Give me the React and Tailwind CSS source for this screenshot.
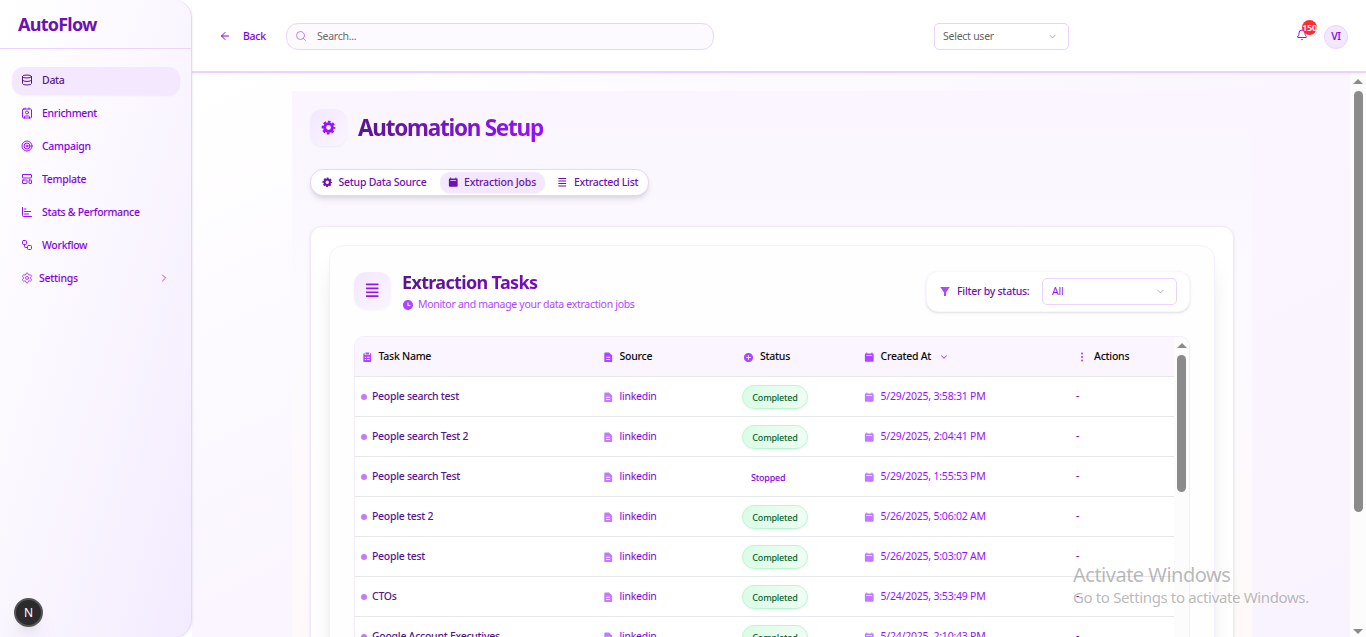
import {
  ArrowLeft, Bell, ChartBar, ChevronDown, ChevronRight, Contact, Database,
  LayoutTemplate, Search, Settings, Target, Workflow,
} from "lucide-react";
import { RiAddCircleFill, RiFilterFill, RiMore2Fill, RiTimeFill } from "react-icons/ri";

function CalendarIcon({ size = 10.5, className = "" }) {
  return (
    <svg width={size} height={size} viewBox="0 0 24 24" fill="currentColor" className={className}>
      <path fillRule="evenodd" d="M17 3.500h4a1 1 0 0 1 1 1V20a2 2 0 0 1-2 2H4a2 2 0 0 1-2-2V4.500a1 1 0 0 1 1-1h2V1h2v2.500h10V1h2v2.500zM5.500 7.500v1.800h13V7.500h-13z" />
    </svg>
  );
}

function GearIcon({ size = 10.5, className = "" }) {
  return (
    <svg width={size} height={size} viewBox="0 0 24 24" fill="none" stroke="currentColor" className={className}>
      <circle cx="12" cy="12" r="6.200" strokeWidth="4.600" />
      <circle cx="12" cy="12" r="9.300" strokeWidth="3.400" strokeDasharray="4.300 3.004" strokeDashoffset="2.150" />
    </svg>
  );
}

function LinesIcon({ size = 10.5, className = "" }) {
  return (
    <svg width={size} height={size} viewBox="0 0 24 24" stroke="currentColor" strokeWidth="2.500" className={className}>
      <path d="M3 3.500h18M3 9.200h18M3 14.900h18M3 20.600h18" />
    </svg>
  );
}

function FileIcon({ size = 10.5, className = "" }) {
  return (
    <svg width={size} height={size} viewBox="0 0 24 24" fill="currentColor" className={className}>
      <path fillRule="evenodd" d="M5 1h9l7 7v13a2 2 0 0 1-2 2H5a2 2 0 0 1-2-2V3a2 2 0 0 1 2-2zM7.500 11v2h9v-2h-9zM7.500 16v2h9v-2h-9z" />
    </svg>
  );
}

function ClipboardIcon({ size = 10.5, className = "" }) {
  return (
    <svg width={size} height={size} viewBox="0 0 24 24" fill="currentColor" className={className}>
      <path fillRule="evenodd" d="M3 5a2 2 0 0 1 2-2h1v4h12V3h1a2 2 0 0 1 2 2v16a2 2 0 0 1-2 2H5a2 2 0 0 1-2-2V5zM6.500 11v2.200h3V11h-3zM11.500 11v2.200h6V11h-6zM6.500 16v2.200h3V16h-3zM11.500 16v2.200h6V16h-6z" />
      <path d="M8 1h8v4.500H8z" />
    </svg>
  );
}

const nav = [
  { icon: Database, label: "Data", active: true },
  { icon: Contact, label: "Enrichment" },
  { icon: Target, label: "Campaign" },
  { icon: LayoutTemplate, label: "Template" },
  { icon: ChartBar, label: "Stats & Performance" },
  { icon: Workflow, label: "Workflow" },
];

const rows = [
  ["People search test", "Completed", "5/29/2025, 3:58:31 PM"],
  ["People search Test 2", "Completed", "5/29/2025, 2:04:41 PM"],
  ["People search Test", "Stopped", "5/29/2025, 1:55:53 PM"],
  ["People test 2", "Completed", "5/26/2025, 5:06:02 AM"],
  ["People test", "Completed", "5/26/2025, 5:03:07 AM"],
  ["CTOs", "Completed", "5/24/2025, 3:53:49 PM"],
  ["Google Account Executives", "Completed", "5/24/2025, 2:10:43 PM"],
];

function Sidebar() {
  return (
    <aside className="z-20 flex w-[192px] shrink-0 flex-col rounded-r-[18px] border-r border-purple-200 bg-linear-to-br from-white via-[#faf6ff] to-[#f3ebff] shadow-sm">
      <div className="flex h-[49px] shrink-0 items-center border-b border-purple-200 pl-[18px] text-[18px] font-bold tracking-[-0.75px] text-purple-800">
        <span>AutoFlow</span>
      </div>
      <nav className="flex flex-col gap-[5px] px-[12px] pt-[18px] text-purple-700">
        {nav.map(({ icon: Icon, label, active }) => (
          <div
            key={label}
            className={
              active
                ? "-mr-px flex h-[28px] items-center gap-[9px] rounded-[12px] bg-purple-100 pl-[9px] text-purple-900 shadow-xs"
                : "flex h-[28px] items-center gap-[9px] pl-[9px]"
            }
          >
            <Icon size={12} className={active ? "mb-[2px] text-purple-900" : "mb-[2px] text-purple-600"} />
            <span className="pb-[2px] tracking-[-0.3px]">{label}</span>
          </div>
        ))}
        <div className="flex h-[28px] items-center pl-[9px] pr-[9px]">
          <Settings size={12} className="mr-[6px] mb-[2px] text-purple-500" />
          <span className="pb-[2px]">Settings</span>
          <ChevronRight size={12} className="mb-[2px] ml-auto text-purple-500" />
        </div>
      </nav>
    </aside>
  );
}

function Header() {
  return (
    <header className="z-10 flex h-[73px] shrink-0 items-center border-b-2 border-purple-200 bg-white/90 pt-[2px] pl-[27px] pr-[18px] shadow-xs">
      <ArrowLeft size={12} className="mb-[2px] text-purple-700" />
      <span className="ml-[12px] w-[43px] text-purple-700">Back</span>
      <div className="flex h-[27px] w-[428px] items-center gap-[10px] rounded-[12px] border border-purple-200 bg-[#fcfaff] pl-[8px] font-normal text-[#6b6b6b]">
        <Search size={12} className="mb-[2px] text-purple-400" />
        <span>Search...</span>
      </div>
      <div className="ml-[220px] flex h-[27px] w-[135px] items-center justify-between rounded-[5px] border border-purple-200 bg-white pl-[8px] pr-[10px] font-normal text-[#666]">
        <span>Select user</span>
        <ChevronDown size={11} className="text-[#aaa]" />
      </div>
      <div className="relative ml-auto mr-[16px] mb-[3px]">
        <Bell size={12} className="text-purple-600" />
        <span className="absolute left-[6px] top-[-9px] flex size-[15px] items-center justify-center rounded-full bg-[#fb2c36] text-[9px] font-semibold tracking-[-0.3px] text-white">150</span>
      </div>
      <div className="flex size-[24px] items-center justify-center rounded-full border border-purple-200 bg-purple-100 text-purple-700">VI</div>
    </header>
  );
}

function Tabs() {
  return (
    <div className="mt-[23px] flex h-[27px] w-[339px] items-center rounded-[13px] border border-purple-200 bg-white pl-[11px] text-purple-800 shadow-md">
      <GearIcon className="mr-[6px]" />
      <span className="w-[101px]">Setup Data Source</span>
      <div className="flex h-[21px] w-[105px] items-center rounded-[10px] bg-purple-100 pl-[8px] tracking-[-0.17px] shadow-xs">
        <CalendarIcon className="mr-[6px]" />
        <span>Extraction Jobs</span>
      </div>
      <LinesIcon className="ml-[12px] mr-[7px]" />
      <span>Extracted List</span>
    </div>
  );
}

function TaskTable() {
  return (
    <div className="flex h-[420px] overflow-hidden rounded-t-[10px] border-x border-t border-[#f3ecfd]">
      <div className="w-[819px]">
        <div className="grid h-[40px] grid-cols-[241px_140px_121px_213px_104px] items-center border-b border-gray-200 bg-[#faf5ff] text-[#0a0a0a]">
          <div className="flex items-center gap-[6px] pl-[7px]"><ClipboardIcon className="mt-[2px] text-purple-500" /><span>Task Name</span></div>
          <div className="flex items-center gap-[6px] pl-[7px]"><FileIcon className="mt-[2px] text-purple-500" /><span>Source</span></div>
          <div className="flex items-center gap-[6px] pl-[7px]"><RiAddCircleFill size={11} className="mt-[2px] text-purple-500" /><span>Status</span></div>
          <div className="flex items-center gap-[6px] pl-[7px]"><CalendarIcon className="mt-[2px] text-purple-500" /><span>Created At</span><ChevronDown size={10} strokeWidth={2.5} className="ml-[2px] text-purple-500" /></div>
          <div className="flex items-center gap-[6px] pl-[6px]"><RiMore2Fill size={12} className="mt-px text-purple-500" /><span>Actions</span></div>
        </div>
        {rows.map(([name, status, date]) => (
          <div key={date} className="grid h-[40px] grid-cols-[241px_140px_121px_213px_104px] items-center border-b border-gray-200 bg-white">
            <div className="flex items-center gap-[5px] pl-[6px] text-purple-900"><span className="mt-px size-[6px] rounded-full bg-purple-400" /><span className="tracking-[-0.28px]">{name}</span></div>
            <div className="flex items-center gap-[6px] pl-[7px] font-normal text-purple-700"><FileIcon className="mt-[2px] text-purple-400" /><span>linkedin</span></div>
            <div className="pl-[6px] text-[9px] tracking-[-0.2px]">
              {status === "Completed" ? (
                <span className="flex h-[24px] w-[66px] items-center justify-center rounded-full border border-green-200 bg-linear-to-r from-green-100 to-green-50 pt-px text-green-800 shadow-xs">Completed</span>
              ) : (
                <span className="mt-[2px] block pl-[9px] text-purple-700">Stopped</span>
              )}
            </div>
            <div className="flex items-center gap-[6px] pl-[7px] font-normal tracking-[-0.22px] text-purple-600"><CalendarIcon className="mt-[2px] text-purple-400" /><span>{date}</span></div>
            <div className="pl-[6px] text-purple-800">-</div>
          </div>
        ))}
      </div>
      <div className="flex flex-1 flex-col items-center bg-[#fcfcfc] pt-[6px]">
        <span className="h-0 w-0 border-x-[5px] border-b-[5px] border-x-transparent border-b-[#8b8b8b]" />
        <span className="mt-[7px] h-[137px] w-[9px] rounded-full bg-[#8b8b8b]" />
      </div>
    </div>
  );
}

export default function App() {
  return (
    <div className="relative flex h-[637px] w-full overflow-hidden bg-white font-['Noto_Sans','Open_Sans',sans-serif] text-[10.5px] leading-[15px] font-medium tracking-[-0.25px]">
      <Sidebar />
      <div className="flex min-w-0 flex-1 flex-col">
        <Header />
        <div className="flex min-h-0 flex-1">
          <main className="min-w-0 flex-1 overflow-hidden bg-linear-to-br from-white via-[#faf5ff] via-50% to-[#f9f3ff] pl-[100px] pt-[18px]">
            <div className="h-[600px] w-[960px] bg-linear-to-b from-[#faf5ff] via-[#fcfaff] via-40% to-[#fff9f7] px-[18px] pt-[18px]">
              <div className="flex items-center gap-[11px]">
                <div className="flex size-[37px] items-center justify-center rounded-[12px] bg-linear-to-br from-purple-100 to-purple-50 pr-px pb-px shadow-xs">
                  <GearIcon size={15} className="text-purple-600" />
                </div>
                <h1 className="bg-linear-to-r from-purple-900 to-purple-600 bg-clip-text text-[22.5px] leading-[36px] font-bold tracking-[-1.25px] text-transparent">Automation Setup</h1>
              </div>
              <Tabs />
              <section className="mt-[30px] h-[520px] w-[924px] rounded-[12px] border border-purple-100 bg-white px-[18px] pt-[18px] shadow-sm">
                <div className="h-[500px] w-[886px] rounded-[14px] border border-[#f6f0fe] bg-[#fefefe] pr-[24px] pl-[24px] pt-[25px] shadow-xl">
                  <div className="flex h-[65px] items-start">
                    <div className="mt-px flex size-[37px] items-center justify-center rounded-[12px] bg-linear-to-br from-purple-100 to-purple-50 shadow-xs">
                      <LinesIcon size={16.5} className="text-purple-600" />
                    </div>
                    <div className="ml-[11px]">
                      <h2 className="w-[190px] bg-linear-to-r from-purple-900 to-purple-700 bg-clip-text text-[18px] leading-[22px] font-bold tracking-[-0.66px] text-transparent">Extraction Tasks</h2>
                      <div className="mt-[4px] flex items-center gap-[4px] font-normal tracking-[-0.3px] text-purple-500">
                        <RiTimeFill size={12} className="mt-px" />
                        <span>Monitor and manage your data extraction jobs</span>
                      </div>
                    </div>
                    <div className="ml-auto flex h-[41px] w-[264px] items-center rounded-[12px] border border-purple-50 bg-white pl-[12px] text-purple-800 shadow-sm">
                      <RiFilterFill size={12} className="mr-[6px] mb-px text-purple-500" />
                      <span className="w-[85px]">Filter by status:</span>
                      <div className="flex h-[27px] w-[135px] items-center justify-between rounded-[5px] border border-purple-200 pl-[9px] pr-[10px] font-normal text-purple-600">
                        <span>All</span>
                        <ChevronDown size={11} className="text-[#aaa]" />
                      </div>
                    </div>
                  </div>
                  <TaskTable />
                </div>
              </section>
            </div>
          </main>
          <div className="flex w-[16px] shrink-0 flex-col items-center bg-[#fcfcfc] pt-[6px] pb-[3px]">
            <span className="h-0 w-0 border-x-[5px] border-b-[5px] border-x-transparent border-b-[#8b8b8b]" />
            <span className="mt-[7px] h-[421px] w-[9px] rounded-full bg-[#8b8b8b]" />
            <span className="mt-auto h-0 w-0 border-x-[5px] border-t-[5px] border-x-transparent border-t-[#8b8b8b]" />
          </div>
        </div>
      </div>
      <div className="absolute left-[14px] top-[598px] z-30 flex size-[29px] items-center justify-center rounded-full border-2 border-[#555] bg-[#2b2b2b] text-[12px] font-normal text-white shadow-xl">N</div>
      <div className="absolute left-[1073px] top-[562px] z-30 font-normal whitespace-nowrap text-[#8b8b8b]/60">
        <div className="text-[20px] leading-[26px] tracking-[-0.5px]">Activate Windows</div>
        <div className="text-[15px] leading-[19px] tracking-[-0.36px]">Go to Settings to activate Windows.</div>
      </div>
    </div>
  );
}
